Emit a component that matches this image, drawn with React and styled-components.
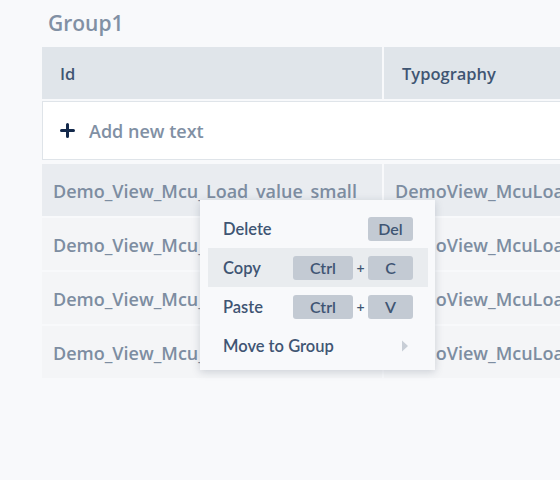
import React from 'react'
import styled, { createGlobalStyle } from 'styled-components'

const GlobalStyle = createGlobalStyle`
  html, body {
    margin: 0;
    padding: 0;
    background: #f8f9fb;
    font-family: "Open Sans", "Noto Sans", sans-serif;
    overflow: hidden;
  }
`

const Page = styled.div`
  width: 560px;
  height: 480px;
  position: relative;
  overflow: hidden;
  padding: 8px 0 0 42px;
  box-sizing: border-box;
`

const Title = styled.div`
  font-size: 21px;
  font-weight: 600;
  color: #8190a4;
  padding-left: 6px;
  height: 39px;
  line-height: 30px;
`

const Table = styled.div`
  display: flex;
  flex-direction: column;
  width: 640px;
`

const Row = styled.div`
  display: grid;
  grid-template-columns: 340px 1fr;
  column-gap: 2px;
  height: 52px;
  margin-bottom: 2px;
`

const HeadCell = styled.div`
  background: #e0e5ea;
  color: #3f5573;
  font-size: 16.5px;
  font-weight: 600;
  display: flex;
  align-items: center;
  padding-left: 18px;
`

const AddRow = styled.div`
  height: 59px;
  background: #ffffff;
  border: 1px solid #dfe4e9;
  box-sizing: border-box;
  display: flex;
  align-items: center;
  gap: 14px;
  padding-left: 17px;
  margin-bottom: 4px;
  color: #8190a4;
  font-size: 18px;
  font-weight: 600;
`

const Cell = styled.div`
  background: ${p => (p.$hover ? '#e9ecf0' : '#f4f5f7')};
  color: #7d8da1;
  font-size: 18px;
  font-weight: 600;
  display: flex;
  align-items: center;
  padding: 2px 0 0 11px;
  white-space: nowrap;
  overflow: hidden;
`

const Menu = styled.div`
  position: absolute;
  left: 200px;
  top: 200px;
  width: 235px;
  box-sizing: border-box;
  padding: 9px 7px 5px 8px;
  background: #f8f9fb;
  box-shadow: 0 2px 8px rgba(60, 75, 95, 0.22);
  font-family: "Lato", "Open Sans", sans-serif;
`

const Item = styled.div`
  height: 39px;
  display: flex;
  align-items: center;
  padding: 0 15px;
  background: ${p => (p.$active ? '#e9ecef' : 'transparent')};
  color: #3f5573;
  font-size: 16.5px;
  font-weight: 600;
`

const Label = styled.span`
  flex: 1;
`

const Keys = styled.div`
  display: flex;
  align-items: center;
`

const Kbd = styled.span`
  width: ${p => p.$w}px;
  height: 24px;
  border-radius: 3px;
  background: #c3cad3;
  color: #3f5573;
  font-size: 16px;
  font-weight: 600;
  display: flex;
  align-items: center;
  justify-content: center;
`

const Plus = styled.span`
  width: 15px;
  text-align: center;
  font-size: 14px;
  color: #3f5573;
`

const Chevron = styled.svg`
  margin-right: 4px;
`

const rows = [0, 1, 2, 3]

export default function App() {
  return (
    <Page>
      <GlobalStyle />
      <Title>Group1</Title>
      <Table>
        <Row>
          <HeadCell>Id</HeadCell>
          <HeadCell>Typography</HeadCell>
        </Row>
        <AddRow>
          <svg width="15" height="15" viewBox="0 0 15 15">
            <path d="M7.5 1.5v12M1.5 7.5h12" stroke="#13294b" strokeWidth="3" strokeLinecap="round" />
          </svg>
          Add new text
        </AddRow>
        {rows.map(i => (
          <Row key={i}>
            <Cell $hover={i === 0}>Demo_View_Mcu_Load_value_small</Cell>
            <Cell $hover={i === 0}>DemoView_McuLoad_value_small</Cell>
          </Row>
        ))}
      </Table>
      <Menu>
        <Item>
          <Label>Delete</Label>
          <Kbd $w={45}>Del</Kbd>
        </Item>
        <Item $active>
          <Label>Copy</Label>
          <Keys>
            <Kbd $w={60}>Ctrl</Kbd>
            <Plus>+</Plus>
            <Kbd $w={45}>C</Kbd>
          </Keys>
        </Item>
        <Item>
          <Label>Paste</Label>
          <Keys>
            <Kbd $w={60}>Ctrl</Kbd>
            <Plus>+</Plus>
            <Kbd $w={45}>V</Kbd>
          </Keys>
        </Item>
        <Item>
          <Label>Move to Group</Label>
          <Chevron width="8" height="12" viewBox="0 0 8 12">
            <path d="M1 0.5l6 5.5-6 5.5z" fill="#c8ced6" />
          </Chevron>
        </Item>
      </Menu>
    </Page>
  )
}
